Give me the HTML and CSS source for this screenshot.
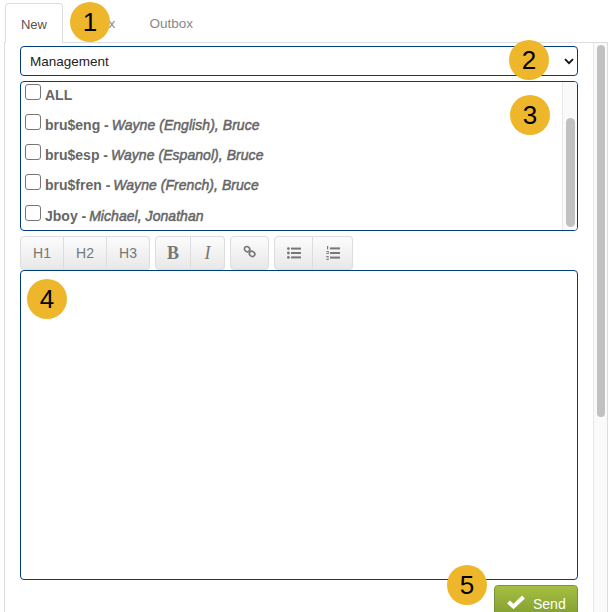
FILE: index.html
```html
<!DOCTYPE html>
<html lang="en">
<head>
<meta charset="utf-8">
<title>Messages</title>
<link rel="stylesheet" href="styles.css">
</head>
<body>
<div class="page">
  <nav class="tabs">
    <a class="tab active">New</a>
    <a class="tab">Inbox</a>
    <a class="tab">Outbox</a>
  </nav>
  <div class="panel">
    <main class="content">
      <div class="select-wrap">
        <select class="group-select"><option>Management</option></select>
        <svg class="chevron" viewBox="0 0 10 7" width="10" height="7"><path d="M1 1.2 5 5.2 9 1.2" fill="none" stroke="#111" stroke-width="1.8"/></svg>
      </div>
      <div class="list">
        <ul class="rows">
          <li class="row"><span class="check"></span><b>ALL</b></li>
          <li class="row"><span class="check"></span><span><b>bru$eng - </b><em>Wayne (English), Bruce</em></span></li>
          <li class="row"><span class="check"></span><span><b>bru$esp - </b><em>Wayne (Espanol), Bruce</em></span></li>
          <li class="row"><span class="check"></span><span><b>bru$fren - </b><em>Wayne (French), Bruce</em></span></li>
          <li class="row last"><span class="check"></span><span><b>Jboy - </b><em>Michael, Jonathan</em></span></li>
        </ul>
        <div class="list-track"><div class="list-thumb"></div></div>
      </div>
      <div class="toolbar">
        <div class="group">
          <button class="btn head">H1</button><button class="btn head">H2</button><button class="btn head">H3</button>
        </div>
        <div class="group">
          <button class="btn fmt bold">B</button><button class="btn fmt ital">I</button>
        </div>
        <div class="group">
          <button class="btn icon link">
            <svg class="link-icon" viewBox="0 0 14 14" width="13" height="13"><g fill="none" stroke="#777" stroke-width="1.8"><ellipse cx="4.4" cy="4.4" rx="3" ry="2.6" transform="rotate(35 4.4 4.4)"/><ellipse cx="9.8" cy="9.6" rx="3" ry="2.6" transform="rotate(35 9.8 9.6)"/></g></svg>
          </button>
        </div>
        <div class="group">
          <button class="btn icon list-btn">
            <svg viewBox="0 0 14 12" width="14" height="12"><g fill="#777"><circle cx="1.4" cy="1.6" r="1.4"/><circle cx="1.4" cy="6" r="1.4"/><circle cx="1.4" cy="10.4" r="1.4"/><rect x="4" y="0.6" width="10" height="2"/><rect x="4" y="5" width="10" height="2"/><rect x="4" y="9.4" width="10" height="2"/></g></svg>
          </button><button class="btn icon list-btn">
            <svg viewBox="0 0 14 14" width="14" height="14"><g fill="#777"><rect x="1" y="0" width="1.2" height="3.4"/><rect x="0.2" y="5" width="2.6" height="0.9"/><rect x="1.9" y="5.6" width="0.9" height="1.2"/><rect x="0.2" y="7" width="2.6" height="0.9"/><rect x="0.2" y="10" width="2.6" height="0.9"/><rect x="0.8" y="11.5" width="2" height="0.8"/><rect x="0.2" y="13" width="2.6" height="0.9"/><rect x="4" y="1.4" width="10" height="2"/><rect x="4" y="6" width="10" height="2"/><rect x="4" y="10.6" width="10" height="2"/></g></svg>
          </button>
        </div>
      </div>
      <div class="editor"></div>
      <div class="actions">
        <button class="send">
          <svg class="send-icon" viewBox="0 0 18 14" width="18" height="14"><path d="M1.5 7 6.5 11.5 16.5 2" fill="none" stroke="#fff" stroke-width="4"/></svg>
          <span>Send</span>
        </button>
      </div>
    </main>
    <div class="page-track"><div class="page-thumb"></div></div>
  </div>
  <span class="badge b1">1</span>
  <span class="badge b2">2</span>
  <span class="badge b3">3</span>
  <span class="badge b4">4</span>
  <span class="badge b5">5</span>
</div>
</body>
</html>
```
FILE: styles.css
```css
* { box-sizing: border-box; }
html, body { margin: 0; height: 100%; overflow: hidden; background: #fff; }
body { font-family: "Liberation Sans", Arial, sans-serif; font-size: 13.5px; color: #666; }

.page { position: relative; width: 611px; height: 612px; padding: 3px 3px 0 4px; overflow: hidden; }

.tabs { display: flex; gap: 4px; height: 40px; padding-left: 1px; }
.tab { display: block; padding: 0 15.2px; line-height: 41px; color: #888; height: 40px; }
.tab.active { width: 58px; padding: 0; text-align: center; color: #555; background: #fff; border: 1px solid #ddd; border-bottom: 0; border-radius: 4px 4px 0 0; position: relative; z-index: 1; font-size: 13px; }

.panel { display: flex; height: 570px; margin-top: -1px; border: 1px solid #ddd; border-bottom: 0; }
.content { width: 588px; padding: 3px 15px 0 15px; flex: none; }

.select-wrap { position: relative; height: 30px; }
.group-select { display: block; width: 100%; height: 30px; padding: 0 9px; appearance: none; background: #fff; border: 1px solid #003e7e; border-radius: 4px; font: 13.5px "Liberation Sans", Arial, sans-serif; color: #222; }
.chevron { position: absolute; right: 4px; top: 12px; }

.list { display: flex; height: 150px; margin-top: 5px; border: 1px solid #003e7e; border-radius: 4px; overflow: hidden; }
.rows { flex: 1; margin: 0; padding: 2px 0 0 4px; list-style: none; font-size: 14px; }
.row { display: flex; align-items: flex-start; gap: 4px; height: 30px; line-height: 23px; color: #666; }
.row.last { margin-top: 1px; }
.row b { font-weight: 700; }
.row em { font-style: italic; font-weight: 400; letter-spacing: 0.05px; margin-left: -1px; -webkit-text-stroke: 0.5px #666; }
.check { flex: none; width: 16px; height: 16px; border: 1px solid #767676; border-radius: 3px; background: #fff; }

.list-track { width: 15px; padding: 36px 2px 0 3px; background: #fafafa; border-left: 1px solid #e8e8e8; }
.list-thumb { height: 109px; background: #c1c1c1; border-radius: 5px; }

.toolbar { display: flex; gap: 5px; height: 34px; margin-top: 5px; }
.group { display: flex; height: 34px; }
.btn { height: 34px; padding: 0; margin: 0; display: flex; align-items: center; justify-content: center; border: 1px solid #ddd; border-left-width: 0; background: linear-gradient(#fcfcfc, #e8e8e8); color: #777; font: 13px "Liberation Sans", Arial, sans-serif; }
.btn:first-child { border-left-width: 1px; border-radius: 4px 0 0 4px; }
.btn:last-child { border-radius: 0 4px 4px 0; }
.btn:only-child { border-radius: 4px; }
.btn.head { width: 43px; font-size: 14px; }
.btn.head:first-child { width: 44px; }
.btn.fmt { font-family: "Liberation Serif", serif; font-size: 18px; }
.btn.bold { width: 36px; font-weight: 700; }
.btn.ital { width: 34px; font-style: italic; }
.btn.link { width: 39px; }
.link-icon { margin-top: -3px; }
.btn.list-btn { width: 40px; }
.btn.list-btn:first-child { width: 39px; }

.editor { height: 310px; border: 1px solid #003e7e; border-radius: 4px; background: #fff; }

.actions { display: flex; justify-content: flex-end; margin-top: 5px; }
.send { display: flex; align-items: center; gap: 8px; width: 84px; height: 36px; padding: 2px 0 0 12px; border: 1px solid #78933a; border-radius: 4px; background: linear-gradient(#a6bf42, #7c9a2e); color: #fff; font: 14px "Liberation Sans", Arial, sans-serif; }
.send-icon { margin-top: -4px; }

.page-track { flex: 1; padding: 2px 2px 0 3px; background: #fafafa; border-left: 1px solid #e8e8e8; }
.page-thumb { height: 372px; background: #c1c1c1; border-radius: 4px; }

.badge { position: absolute; width: 40px; height: 40px; border-radius: 50%; background: #edb62b; color: #000; font-size: 26px; line-height: 40px; text-align: center; z-index: 2; }
.b1 { left: 70px; top: 2px; }
.b2 { left: 509px; top: 40px; }
.b3 { left: 510px; top: 95px; }
.b4 { left: 27px; top: 279px; }
.b5 { left: 447px; top: 565px; }
```
